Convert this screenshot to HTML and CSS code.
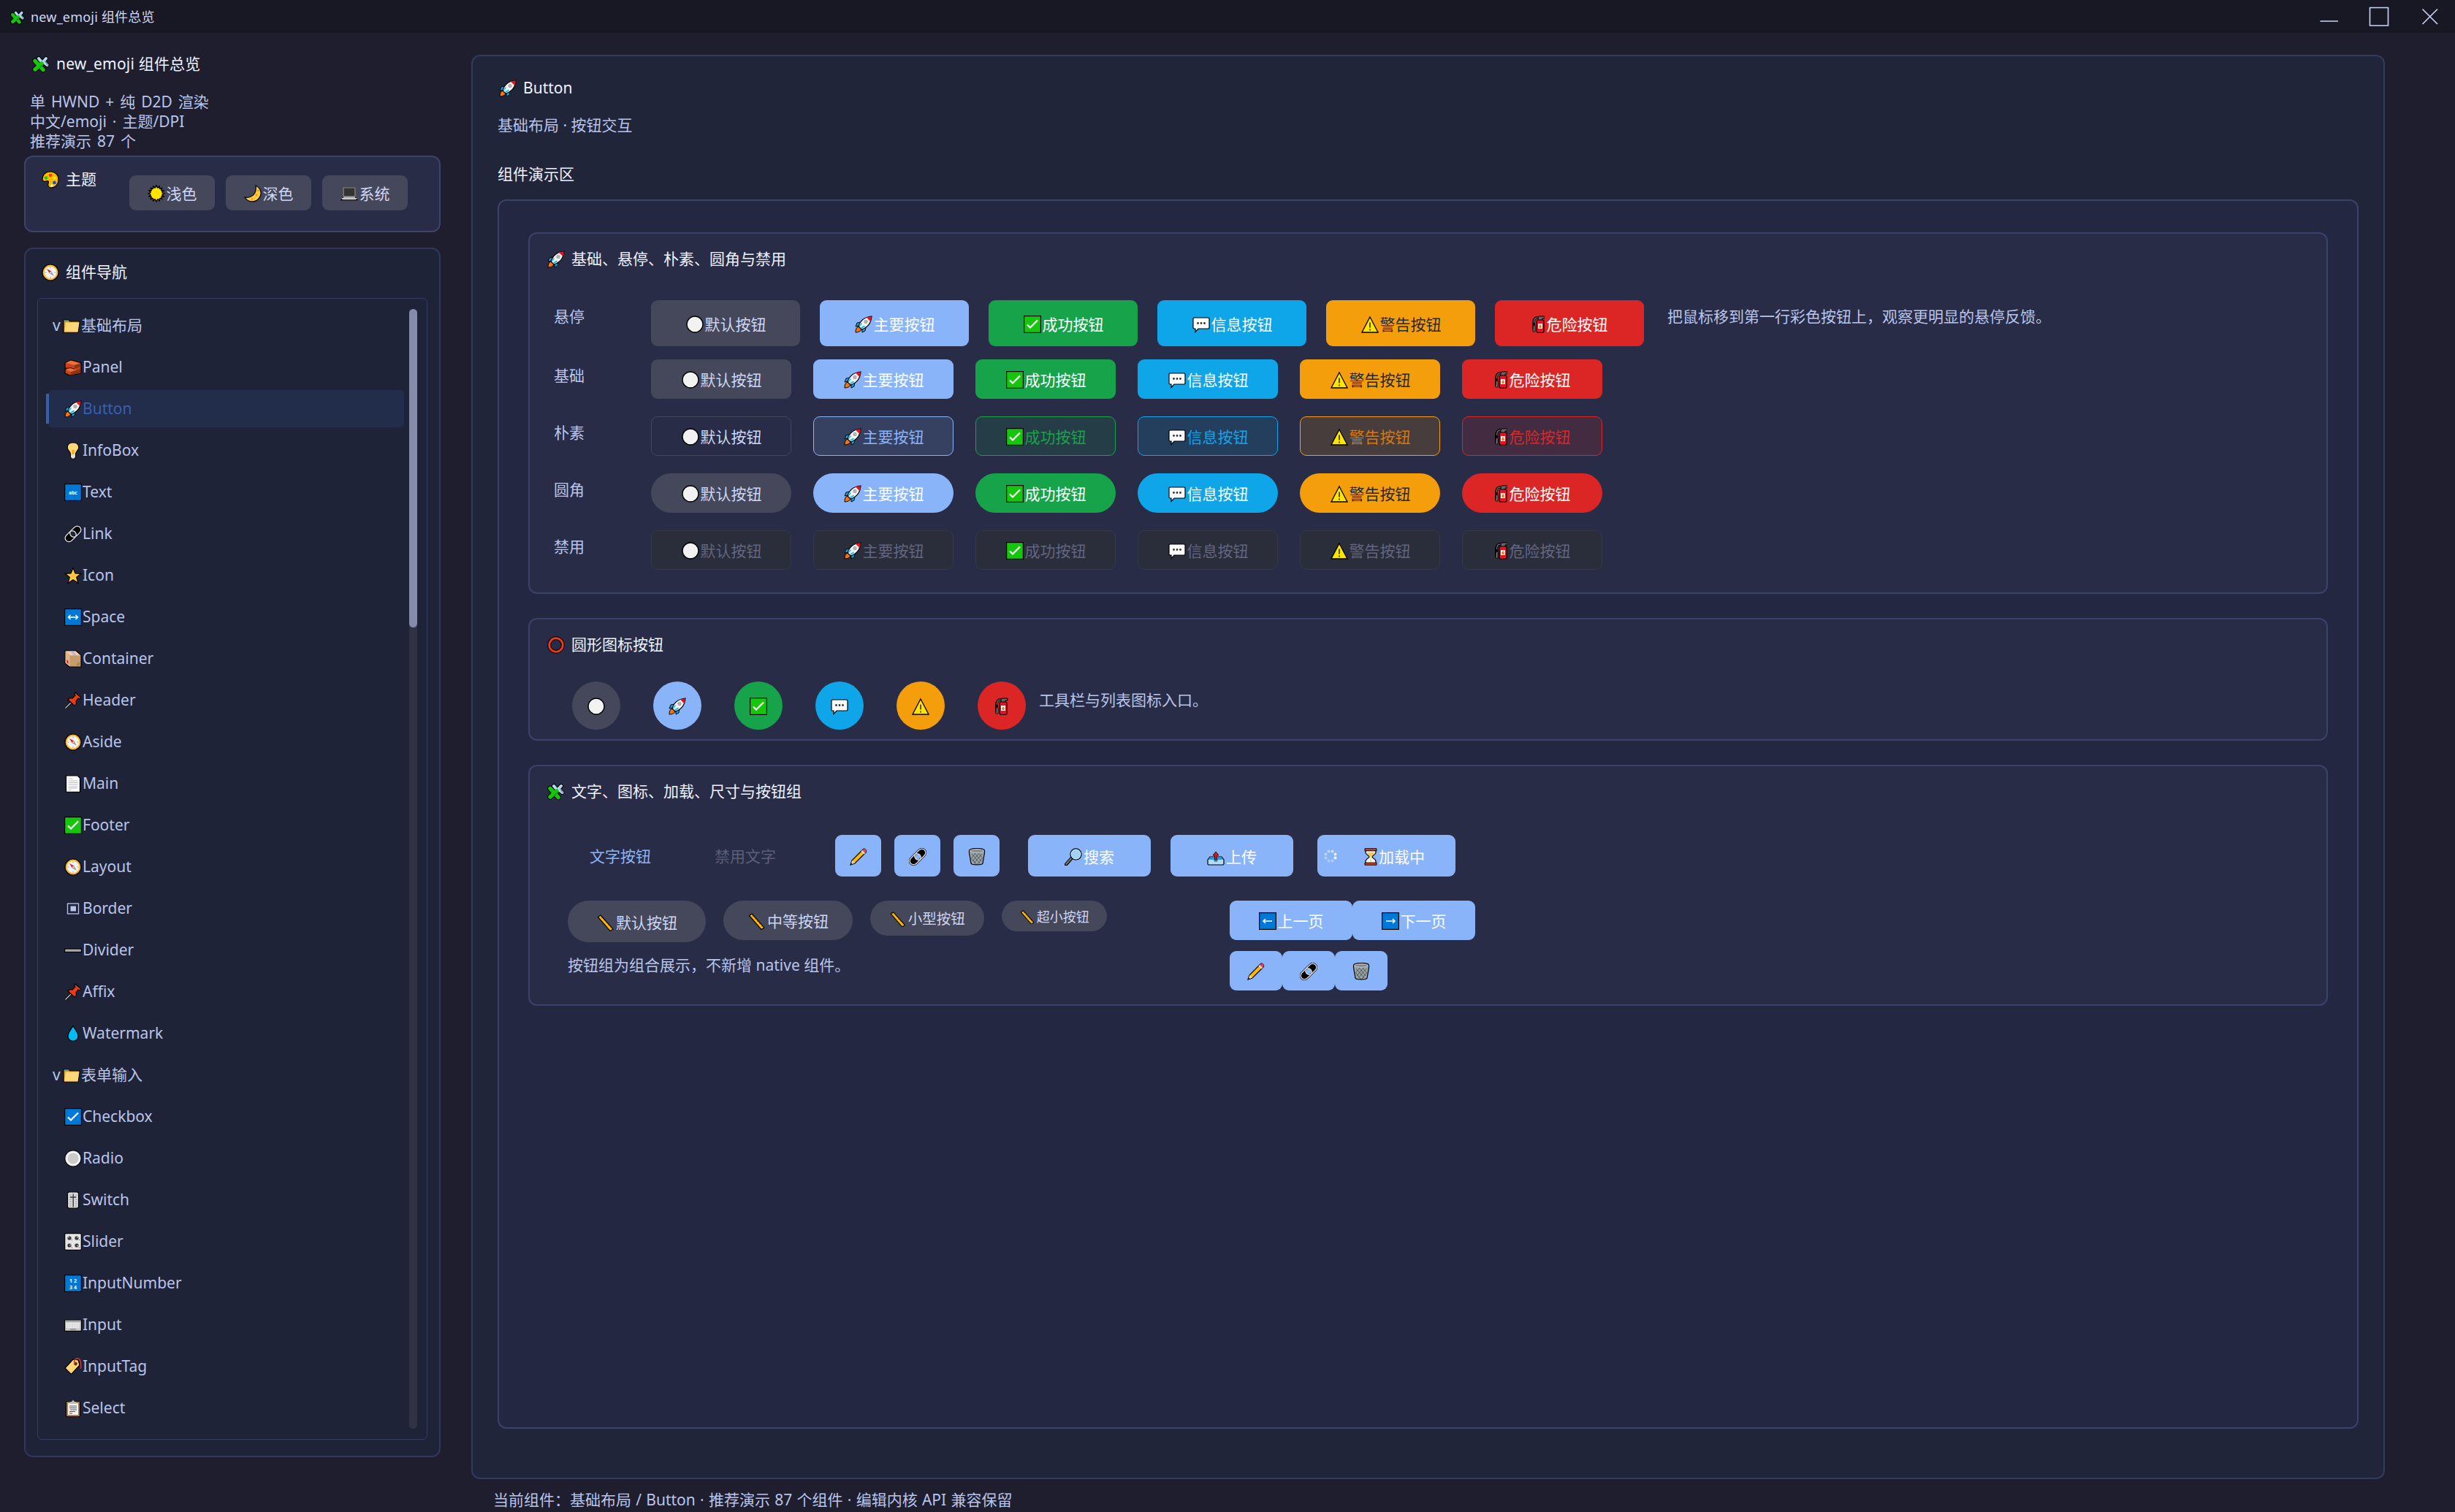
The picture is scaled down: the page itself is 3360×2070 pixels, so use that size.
FILE: index.html
```html
<!DOCTYPE html>
<html lang="zh-CN">
<head>
    <meta charset="UTF-8">
    <meta name="viewport" content="width=device-width, initial-scale=1.0">
    <title>new_emoji 组件总览</title>
    <link rel="stylesheet" href="styles.css">
</head>
<body>

    <!-- Icon sprite -->
    <svg class="sprite" xmlns="http://www.w3.org/2000/svg">
        <symbol id="puzzle" viewBox="0 0 24 24">
            <g fill="none" stroke-linecap="round">
                <path d="M9 4l4 5M19 4l-7 8M20.500 13l-5-4" stroke="#000" stroke-width="6"/>
                <path d="M4 7.500L15 19.500M4 19l9-8" stroke="#000" stroke-width="7.500"/>
                <path d="M9 4l4 5M19 4l-7 8M20.500 13l-5-4" stroke="#b4d6f0" stroke-width="4"/>
                <path d="M18 8l3 5" stroke="#7f97a8" stroke-width="1.500"/>
                <path d="M4 7.500L15 19.500M4 19l9-8" stroke="#16c60c" stroke-width="5.500"/>
                <path d="M14 13l-4 4" stroke="#0f9a08" stroke-width="1.600"/>
            </g>
        </symbol>
        <symbol id="palette" viewBox="0 0 24 24">
            <path d="M12 1C5 1 1 6 1 11c0 3 2 4 5 3 3-1 4 0 3 3-1 4 1 6 4 6 6 0 10-5 10-11C23 5 18 1 12 1z" fill="#ffb900" stroke="#000" stroke-width="1.200"/>
            <circle cx="12" cy="6" r="2.200" fill="#f03a17"/><circle cx="6" cy="9.500" r="2.200" fill="#16c60c"/>
            <circle cx="17.500" cy="9.500" r="2" fill="#fff100"/><circle cx="17.500" cy="16" r="2.300" fill="#0050ef"/><circle cx="14" cy="20" r="1.600" fill="#fff"/>
        </symbol>
        <symbol id="sun" viewBox="0 0 24 24">
            <path d="M12 .8L14 4.700 16.300 1.700 16.600 6 19.900 4.100 18.500 8.100 22.300 7.700 19.300 10.500 23.200 12 19.300 13.500 22.300 16.300 18.500 15.900 19.900 19.900 16.600 18 16.300 22.300 14 19.300 12 23.200 10 19.300 7.700 22.300 7.400 18 4.100 19.900 5.500 15.900 1.700 16.300 4.700 13.500 .8 12 4.700 10.500 1.700 7.700 5.500 8.100 4.100 4.100 7.400 6 7.700 1.700 10 4.700z" fill="#ffb900" stroke="#000" stroke-width="1.300" stroke-linejoin="round"/>
            <circle cx="12" cy="12" r="7.600" fill="#ffe500"/>
        </symbol>
        <symbol id="moon" viewBox="0 0 24 24">
            <path d="M16 1c8 4 9 13 4 18C15 25 5 24 1 17c7 2 17-3 15-16z" fill="#ffc83d" stroke="#000" stroke-width="1.200"/>
            <circle cx="19" cy="8" r="1" fill="#d67d00"/><circle cx="17" cy="14" r="1.500" fill="#e09b20"/><circle cx="11" cy="19.500" r="1" fill="#d67d00"/>
        </symbol>
        <symbol id="laptop" viewBox="0 0 24 24">
            <path d="M4 4h16v12l3 5H1l3-5z" fill="#aaa" stroke="#000" stroke-width="1.200"/>
            <path d="M4 4h16v12H4z" fill="#333" stroke="#999" stroke-width="1.200"/>
            <path d="M1.500 18.500h21" stroke="#ddd" stroke-width="1"/>
        </symbol>
        <symbol id="compass" viewBox="0 0 24 24">
            <circle cx="12" cy="12" r="11" fill="#ffb81f" stroke="#000" stroke-width="1.200"/>
            <circle cx="12" cy="12" r="8.300" fill="#f4f4f4"/>
            <path d="M12 4.500v2M12 17.500v2M4.500 12h2M17.500 12h2" stroke="#999"/>
            <path d="M7 7l6.500 3.500-2.500 3z" fill="#e81224"/><path d="M17 17l-6-3.500 2.500-3z" fill="#999"/>
            <circle cx="12.200" cy="12" r="1.200" fill="#ddd"/>
        </symbol>
        <symbol id="folder" viewBox="0 0 24 24">
            <path d="M1 4h7l1.500 2H23l-2 15H1z" fill="#e8a317" stroke="#000" stroke-width="1.200"/>
            <path d="M1.600 4.600h6l1.200 1.600H1.600z" fill="#31a4dd"/>
            <path d="M4 7.500h18.500L20.500 20.500H2z" fill="#ffd678"/>
        </symbol>
        <symbol id="brick" viewBox="0 0 24 24">
            <path d="M1 6l8-4 14 4v14l-15 3-7-3v-6h2l-2-2z" fill="#c8431a" stroke="#000" stroke-width="1.200"/>
            <path d="M1.800 5.800L9 2.600l13 3.600-8 2.500z" fill="#f07038"/>
            <path d="M14 9l8-2.500v4.500l-8 3z" fill="#8a3416"/>
            <path d="M2 15l6-2 9 2-8 3z" fill="#f07038"/><path d="M9 18.500l13-4.500v5.500L9 22.500z" fill="#8a3416"/>
            <path d="M1 13.500l8-1 5 2" fill="none" stroke="#2a0d05" stroke-width="1"/>
        </symbol>
        <symbol id="rocket" viewBox="0 0 24 24">
            <path d="M5 15l4 4c-1 3-5 4-8 4 0-4 1-7 4-8z" fill="#f7730f" stroke="#000" stroke-width="1"/>
            <path d="M8 9L3 10l-2 5 5-1zM15 16l-1 5-4 2 0-5z" fill="#00a8e8" stroke="#000" stroke-width="1"/>
            <path d="M5 15C7 8 12 2 23 1c-1 11-7 16-14 18z" fill="#f4f4f4" stroke="#000" stroke-width="1.200"/>
            <path d="M16 2.700C18 2 20 1.600 22.500 1.500c0 2.500-.5 4.500-1.200 6.500z" fill="#e81224"/>
            <circle cx="15" cy="8.500" r="2.300" fill="#b8b8b8" stroke="#888" stroke-width=".6"/>
            <path d="M6 14l3-4 1 1-4 5zM9 18l5-3-1-1.500-5 3z" fill="#00bcf2"/>
        </symbol>
        <symbol id="bulb" viewBox="0 0 24 24">
            <path d="M12 1c-9 0-9 8-5.500 11.500C8 14 8.500 16 8.500 17v4l2 2h3l2-2v-4c0-1 .5-3 2-4.500C21 9 21 1 12 1z" fill="#ffd67a" stroke="#000" stroke-width="1.200"/>
            <path d="M9.200 17.500h5.600V21l-1.500 1.500h-2.600L9.200 21z" fill="#e0e0e0"/><path d="M10.500 11h3v6h-3z" fill="#f2a915"/>
        </symbol>
        <symbol id="abc" viewBox="0 0 24 24">
            <rect x=".6" y=".6" width="22.800" height="22.800" fill="#0078d7" stroke="#000" stroke-width="1.200"/>
            <text x="12" y="15" class="glyph-abc">abc</text>
        </symbol>
        <symbol id="link" viewBox="0 0 24 24">
            <g fill="none" transform="rotate(-45 12 12)">
                <path d="M4 5.500h16a6.500 6.500 0 0 1 0 13H4a6.500 6.500 0 0 1 0-13zM12 8.500a3.500 3.500 0 0 0 0 7 3.500 3.500 0 0 0 0-7z" fill="#000" fill-rule="evenodd"/>
                <rect x="-1.200" y="6.800" width="17" height="10.400" rx="5.200" stroke="#d8d8d8" stroke-width="1.500"/>
                <rect x="8.200" y="6.800" width="17" height="10.400" rx="5.200" stroke="#d8d8d8" stroke-width="1.500"/>
            </g>
        </symbol>
        <symbol id="star" viewBox="0 0 24 24">
            <path d="M12 1.500l3 7.500 8 .3-6.300 5 2.200 8L12 17.800 5.100 22.300l2.200-8L1 9.300 9 9z" fill="#ffc83d" stroke="#000" stroke-width="1.200"/>
        </symbol>
        <symbol id="width" viewBox="0 0 24 24">
            <rect x=".6" y=".6" width="22.800" height="22.800" fill="#0078d7" stroke="#000" stroke-width="1.200"/>
            <path d="M5.500 12h13M8.500 9l-3 3 3 3M15.500 9l3 3-3 3" fill="none" stroke="#fff" stroke-width="1.500"/>
        </symbol>
        <symbol id="package" viewBox="0 0 24 24">
            <path d="M1 1h15l7 6v16H7l-6-5z" fill="#c69c6d" stroke="#000" stroke-width="1.200"/>
            <path d="M1.600 1.600h14L22 7.200H8z" fill="#f6cdb4"/><path d="M1.600 2L7.500 7.500v14.800L1.600 17.500z" fill="#e2b48c"/>
            <path d="M8 1.600h4l5 5.600h-4z" fill="#b9b9c4"/><path d="M3.500 13l2 2v4l-2-2z" fill="#e81224"/><path d="M17 20h4M18 18h3" stroke="#8a6a45" stroke-width="1.200"/>
        </symbol>
        <symbol id="pin" viewBox="0 0 24 24">
            <path d="M1.500 22.500l8-8" stroke="#000" stroke-width="3"/><path d="M1.500 22.500l8-8" stroke="#ccc" stroke-width="1.200"/>
            <path d="M15 1l8 7c-1 2-3 2-4 1l-3 4c1 3 0 5-2 6L5 11c1-2 4-3 6-2l4-4c-1-1-1-3 0-4z" fill="#f03a17" stroke="#000" stroke-width="1.200"/>
        </symbol>
        <symbol id="page" viewBox="0 0 24 24">
            <path d="M2.500.8H18l3.500 3.500v19h-19z" fill="#fff" stroke="#000" stroke-width="1.200"/>
            <path d="M5.500 5h6M5.500 8h13M5.500 10.500h13M5.500 13h13M5.500 16h13M5.500 18h12M5.500 20.500h4" stroke="#bbb" stroke-width="1.200"/>
        </symbol>
        <symbol id="check" viewBox="0 0 24 24">
            <rect x=".6" y=".6" width="22.800" height="22.800" fill="#16c60c" stroke="#000" stroke-width="1.200"/>
            <path d="M5 12.500l4 4 10-10" fill="none" stroke="#fff" stroke-width="2.200"/>
        </symbol>
        <symbol id="border" viewBox="0 0 24 24">
            <rect x="4.500" y="5" width="15" height="14" fill="none" stroke="#b9c4ea" stroke-width="1.300"/>
            <rect x="8.500" y="8.500" width="7.500" height="7" fill="#b9c4ea"/>
        </symbol>
        <symbol id="divider" viewBox="0 0 24 24">
            <rect x=".6" y="10" width="22.800" height="4.400" fill="#aaa" stroke="#000" stroke-width="1.200"/>
        </symbol>
        <symbol id="drop" viewBox="0 0 24 24">
            <path d="M12 1.500c3 5 7 9 7 14 0 9-14 9-14 0 0-5 4-9 7-14z" fill="#00bcf2" stroke="#000" stroke-width="1.200"/>
        </symbol>
        <symbol id="checkbox" viewBox="0 0 24 24">
            <rect x=".6" y=".6" width="22.800" height="22.800" fill="#0078d7" stroke="#000" stroke-width="1.200"/>
            <path d="M5 12.500l4 4 10-10" fill="none" stroke="#fff" stroke-width="2.200"/>
        </symbol>
        <symbol id="radio" viewBox="0 0 24 24">
            <circle cx="12" cy="12" r="11.200" fill="#e0e0e0" stroke="#000" stroke-width="1.200"/>
            <circle cx="12" cy="12" r="8.500" fill="#ccc" stroke="#fff" stroke-width="1.500"/>
        </symbol>
        <symbol id="switch" viewBox="0 0 24 24">
            <rect x="4.500" y=".8" width="15" height="22.400" rx="2.500" fill="#ddd" stroke="#000" stroke-width="1.200"/>
            <path d="M7 5h3M7 8h3M7 11h3M7 14h3M7 17h3M7 20h3M14.500 5h3M14.500 11h3M14.500 14h3M14.500 17h3M14.500 20h3" stroke="#999"/>
            <path d="M12.200 3.500v18M8 8h8.500" stroke="#333" stroke-width="1.400"/>
        </symbol>
        <symbol id="knobs" viewBox="0 0 24 24">
            <rect x=".7" y=".7" width="22.600" height="22.600" rx="1.500" fill="#e6e6e6" stroke="#000" stroke-width="1.200"/>
            <g fill="#333" stroke="#888" stroke-width=".5"><circle cx="7" cy="7" r="2.600"/><circle cx="17" cy="7" r="2.600"/><circle cx="7" cy="17" r="2.600"/><circle cx="17" cy="17" r="2.600"/></g>
            <path d="M7 7L5 5M17 7l2-2M7 17l2-1M17 17l2 1" stroke="#ddd"/>
            <path d="M10 9.500h1M20 9.500h1M10 20h1M20 20h1" stroke="#e81224"/>
        </symbol>
        <symbol id="numbers" viewBox="0 0 24 24">
            <rect x=".6" y=".6" width="22.800" height="22.800" fill="#0078d7" stroke="#000" stroke-width="1.200"/>
            <text x="12" y="11" class="glyph-num">1 2</text>
            <text x="12" y="19.500" class="glyph-num">3 4</text>
        </symbol>
        <symbol id="keyboard" viewBox="0 0 24 24">
            <rect x=".6" y="5" width="22.800" height="15.400" rx="1" fill="#ccc" stroke="#000" stroke-width="1.200"/>
            <path d="M1.500 6.500h21" stroke="#8a8a8a" stroke-width="1.500"/>
            <path d="M2.500 10h19M2.500 12.500h19M2.500 15h19" stroke="#fff" stroke-width="1.500" stroke-dasharray="1.600 .7"/><path d="M8 18h8" stroke="#888" stroke-width="1.400"/>
        </symbol>
        <symbol id="tag" viewBox="0 0 24 24">
            <path d="M1 14L12 2l7 1 2 7L9.500 22.500z" fill="#ffd67a" stroke="#000" stroke-width="1.200"/>
            <circle cx="15.500" cy="8" r="2.200" fill="#222" stroke="#c87800"/>
            <path d="M15 8C11 3 17-1 21 2c2 3 2 8 1.500 13" fill="none" stroke="#d13438" stroke-width="1.500"/>
        </symbol>
        <symbol id="clipboard" viewBox="0 0 24 24">
            <rect x="2.500" y="2.500" width="19" height="21" rx="1" fill="#b97a4b" stroke="#000" stroke-width="1.200"/>
            <path d="M5 5h14v16H5z" fill="#f4f4f4"/><path d="M8 3h2l2-2.500L14 3h2v3H8z" fill="#bbb"/>
            <path d="M7 9h10M7 11.500h10M8 14h9M7 16.500h8M7 19h4" stroke="#555" stroke-width="1"/>
        </symbol>
        <symbol id="circle" viewBox="0 0 24 24">
            <circle cx="12" cy="12" r="11" fill="#f2f2f2" stroke="#000" stroke-width="1.400"/>
        </symbol>
        <symbol id="chat" viewBox="0 0 24 24">
            <path d="M2 3h20l1 1v13l-1 1H8l-4 4.500V18H2l-1-1V4z" fill="#fff" stroke="#000" stroke-width="1.200"/>
            <circle cx="7.500" cy="10.500" r="1.400" fill="#333"/><circle cx="12" cy="10.500" r="1.400" fill="#333"/><circle cx="16.500" cy="10.500" r="1.400" fill="#333"/>
        </symbol>
        <symbol id="warning" viewBox="0 0 24 24">
            <path d="M12 2L23 23H1z" fill="#ffe500" stroke="#000" stroke-width="1.300"/>
            <path d="M12 9.500v7M12 18.500v2" stroke="#222" stroke-width="1.500"/>
        </symbol>
        <symbol id="extinguisher" viewBox="0 0 18 24">
            <path d="M10 3C4 2 2 5 2 10v11" fill="none" stroke="#000" stroke-width="3.600"/><path d="M10 3C4 2 2.500 5 2.500 10" fill="none" stroke="#777" stroke-width="1.200"/>
            <path d="M1.500 13.500h2.500V22H1z" fill="#777" stroke="#000" stroke-width=".8"/>
            <path d="M9 1h8v3h-3v3H8V3z" fill="#666" stroke="#000" stroke-width="1"/>
            <rect x="6" y="6" width="10" height="17.300" rx="2" fill="#e81224" stroke="#000" stroke-width="1.200"/>
            <rect x="8" y="11" width="6" height="7" fill="#fff"/><path d="M11 12l2 3-1 2h-2l-1-2z" fill="#f7730f"/>
        </symbol>
        <symbol id="ring" viewBox="0 0 24 24">
            <circle cx="12" cy="12" r="9.300" fill="none" stroke="#000" stroke-width="5"/>
            <circle cx="12" cy="12" r="9.300" fill="none" stroke="#f03a17" stroke-width="2.800"/>
        </symbol>
        <symbol id="pencil" viewBox="0 0 24 24">
            <path d="M1 23l2-6L18 2c2-2 6 1 4 4L7 21z" fill="#ffb900" stroke="#000" stroke-width="1.200"/>
            <path d="M16.500 3.500L18 2c2-2 6 1 4 4l-1.500 1.500z" fill="#e74856"/><path d="M15.500 4.500l1.500-1.500 4 4-1.500 1.500z" fill="#ddd"/>
            <path d="M1.500 22.500L3.300 17l3.500 3.500z" fill="#f2d3b0"/><path d="M1.500 22.500l.8-2 1.200 1.200z" fill="#000"/>
        </symbol>
        <symbol id="trash" viewBox="0 0 24 24">
            <path d="M1.500 3.500c0-4 21-4 21 0v3L20 21c-1 2.500-15 2.500-16 0L1.500 6.500z" fill="#9aa3a6" stroke="#000" stroke-width="1.200"/>
            <ellipse cx="12" cy="4" rx="9.300" ry="2" fill="#7d8689" stroke="#c0c6c8"/>
            <path d="M5 8l11 13M9 7l9 11M14 7l5 6M4 13l7 9M19 8L8 21M15 7L6 18M10 7l-5 6M20 13l-7 9" stroke="#4c5356" stroke-width=".9"/>
        </symbol>
        <symbol id="search" viewBox="0 0 24 24">
            <path d="M2 22.500l8-9" stroke="#000" stroke-width="4.400" stroke-linecap="round"/><path d="M2.300 22l7-8" stroke="#777" stroke-width="2.200" stroke-linecap="round"/>
            <circle cx="15.500" cy="8.500" r="7.600" fill="#9fd3f5" stroke="#000" stroke-width="1.200"/><circle cx="15.500" cy="8.500" r="6.400" fill="none" stroke="#c9e6f8" stroke-width="1"/>
        </symbol>
        <symbol id="upload" viewBox="0 0 24 24">
            <path d="M4 12h16l3 4v6l-1 1H2l-1-1v-6z" fill="#b4dcf5" stroke="#000" stroke-width="1.200"/>
            <path d="M4 13h16l2.500 3H15l-1 3h-4l-1-3H1.500z" fill="#2e96e8"/>
            <path d="M12 5l4 5h-2.500v6h-3v-6H8z" fill="#e81224" stroke="#000" stroke-width=".8"/>
        </symbol>
        <symbol id="hourglass" viewBox="0 0 18 24">
            <path d="M2 3h14v3c0 3-5 4-5 6s5 3 5 6v3H2v-3c0-3 5-4 5-6S2 9 2 6z" fill="#f4f4f4" stroke="#000" stroke-width="1.200"/>
            <path d="M4 6h10c0 3-4 4-4.500 6v8h-1v-8C8 10 4 9 4 6z" fill="#ffc83d"/>
            <path d="M1 .8h16v3H1zM1 20.200h16v3H1z" fill="#e8471c" stroke="#000" stroke-width="1"/>
        </symbol>
        <symbol id="ruler" viewBox="0 0 24 24">
            <path d="M5 2L22 21l-4 2.500L1.500 4.500z" fill="#ffb900" stroke="#000" stroke-width="1.200"/>
            <path d="M7 5L5.800 6M10 8.500l-1.200 1M13 12l-1.200 1M16 15.500l-1.200 1M19 19l-1.200 1" stroke="#a86a00"/>
        </symbol>
        <symbol id="prev" viewBox="0 0 24 24">
            <rect x=".6" y=".6" width="22.800" height="22.800" fill="#0078d7" stroke="#000" stroke-width="1.200"/>
            <path d="M18 12H6.500M9 9l-3 3 3 3" fill="none" stroke="#fff" stroke-width="1.500"/>
        </symbol>
        <symbol id="next" viewBox="0 0 24 24">
            <rect x=".6" y=".6" width="22.800" height="22.800" fill="#0078d7" stroke="#000" stroke-width="1.200"/>
            <path d="M6 12h11.500M15 9l3 3-3 3" fill="none" stroke="#fff" stroke-width="1.500"/>
        </symbol>
    </svg>

    <!-- Title bar -->
    <header class="titlebar">
        <svg class="icon"><use href="#puzzle"/></svg>
        <span class="titlebar-text">new_emoji 组件总览</span>
        <svg class="window-controls" viewBox="0 0 192 45">
            <path d="M7.500 29h24.500M75.500 10.500h25v24.500h-25zM147.500 12.500l20.500 20.500M168 12.500L147.500 33"/>
        </svg>
    </header>

    <div class="layout">
        <!-- Sidebar -->
        <aside class="sidebar">
            <h1 class="heading app-title"><svg class="icon"><use href="#puzzle"/></svg>new_emoji 组件总览</h1>
            <p class="intro">单 HWND + 纯 D2D 渲染<br>中文/emoji · 主题/DPI<br>推荐演示 87 个</p>

            <section class="theme-card">
                <h2 class="heading"><svg class="icon"><use href="#palette"/></svg>主题</h2>
                <div class="theme-buttons">
                    <button class="btn"><svg class="icon"><use href="#sun"/></svg>浅色</button>
                    <button class="btn"><svg class="icon"><use href="#moon"/></svg>深色</button>
                    <button class="btn"><svg class="icon"><use href="#laptop"/></svg>系统</button>
                </div>
            </section>

            <nav class="nav-card">
                <h2 class="heading"><svg class="icon"><use href="#compass"/></svg>组件导航</h2>
                <div class="tree">
                    <ul class="tree-list">
                        <li class="tree-group"><span class="caret">v</span><svg class="icon"><use href="#folder"/></svg>基础布局</li>
                        <li class="tree-item"><svg class="icon"><use href="#brick"/></svg>Panel</li>
                        <li class="tree-item active"><svg class="icon"><use href="#rocket"/></svg>Button</li>
                        <li class="tree-item"><svg class="icon"><use href="#bulb"/></svg>InfoBox</li>
                        <li class="tree-item"><svg class="icon"><use href="#abc"/></svg>Text</li>
                        <li class="tree-item"><svg class="icon"><use href="#link"/></svg>Link</li>
                        <li class="tree-item"><svg class="icon"><use href="#star"/></svg>Icon</li>
                        <li class="tree-item"><svg class="icon"><use href="#width"/></svg>Space</li>
                        <li class="tree-item"><svg class="icon"><use href="#package"/></svg>Container</li>
                        <li class="tree-item"><svg class="icon"><use href="#pin"/></svg>Header</li>
                        <li class="tree-item"><svg class="icon"><use href="#compass"/></svg>Aside</li>
                        <li class="tree-item"><svg class="icon"><use href="#page"/></svg>Main</li>
                        <li class="tree-item"><svg class="icon"><use href="#check"/></svg>Footer</li>
                        <li class="tree-item"><svg class="icon"><use href="#compass"/></svg>Layout</li>
                        <li class="tree-item"><svg class="icon"><use href="#border"/></svg>Border</li>
                        <li class="tree-item"><svg class="icon"><use href="#divider"/></svg>Divider</li>
                        <li class="tree-item"><svg class="icon"><use href="#pin"/></svg>Affix</li>
                        <li class="tree-item"><svg class="icon"><use href="#drop"/></svg>Watermark</li>
                        <li class="tree-group"><span class="caret">v</span><svg class="icon"><use href="#folder"/></svg>表单输入</li>
                        <li class="tree-item"><svg class="icon"><use href="#checkbox"/></svg>Checkbox</li>
                        <li class="tree-item"><svg class="icon"><use href="#radio"/></svg>Radio</li>
                        <li class="tree-item"><svg class="icon"><use href="#switch"/></svg>Switch</li>
                        <li class="tree-item"><svg class="icon"><use href="#knobs"/></svg>Slider</li>
                        <li class="tree-item"><svg class="icon"><use href="#numbers"/></svg>InputNumber</li>
                        <li class="tree-item"><svg class="icon"><use href="#keyboard"/></svg>Input</li>
                        <li class="tree-item"><svg class="icon"><use href="#tag"/></svg>InputTag</li>
                        <li class="tree-item"><svg class="icon"><use href="#clipboard"/></svg>Select</li>
                    </ul>
                    <div class="scrollbar"><div class="scrollbar-thumb"></div></div>
                </div>
            </nav>
        </aside>

        <!-- Component page -->
        <div class="content">
            <main class="page">
                <h2 class="heading page-title"><svg class="icon"><use href="#rocket"/></svg>Button</h2>
                <p class="page-desc">基础布局 · 按钮交互</p>
                <p class="page-label">组件演示区</p>

                <div class="stage">
                    <section class="group group-variants">
                        <h3 class="heading"><svg class="icon"><use href="#rocket"/></svg>基础、悬停、朴素、圆角与禁用</h3>
                        <div class="rows">
                            <div class="row row-hover">
                                <span class="row-label">悬停</span>
                                <button class="btn"><svg class="icon"><use href="#circle"/></svg>默认按钮</button>
                                <button class="btn primary"><svg class="icon"><use href="#rocket"/></svg>主要按钮</button>
                                <button class="btn success"><svg class="icon"><use href="#check"/></svg>成功按钮</button>
                                <button class="btn info"><svg class="icon"><use href="#chat"/></svg>信息按钮</button>
                                <button class="btn warning"><svg class="icon"><use href="#warning"/></svg>警告按钮</button>
                                <button class="btn danger"><svg class="icon narrow"><use href="#extinguisher"/></svg>危险按钮</button>
                                <span class="hint">把鼠标移到第一行彩色按钮上，观察更明显的悬停反馈。</span>
                            </div>
                            <div class="row">
                                <span class="row-label">基础</span>
                                <button class="btn"><svg class="icon"><use href="#circle"/></svg>默认按钮</button>
                                <button class="btn primary"><svg class="icon"><use href="#rocket"/></svg>主要按钮</button>
                                <button class="btn success"><svg class="icon"><use href="#check"/></svg>成功按钮</button>
                                <button class="btn info"><svg class="icon"><use href="#chat"/></svg>信息按钮</button>
                                <button class="btn warning"><svg class="icon"><use href="#warning"/></svg>警告按钮</button>
                                <button class="btn danger"><svg class="icon narrow"><use href="#extinguisher"/></svg>危险按钮</button>
                            </div>
                            <div class="row row-plain">
                                <span class="row-label">朴素</span>
                                <button class="btn"><svg class="icon"><use href="#circle"/></svg>默认按钮</button>
                                <button class="btn primary"><svg class="icon"><use href="#rocket"/></svg>主要按钮</button>
                                <button class="btn success"><svg class="icon"><use href="#check"/></svg>成功按钮</button>
                                <button class="btn info"><svg class="icon"><use href="#chat"/></svg>信息按钮</button>
                                <button class="btn warning"><svg class="icon"><use href="#warning"/></svg>警告按钮</button>
                                <button class="btn danger"><svg class="icon narrow"><use href="#extinguisher"/></svg>危险按钮</button>
                            </div>
                            <div class="row row-round">
                                <span class="row-label">圆角</span>
                                <button class="btn"><svg class="icon"><use href="#circle"/></svg>默认按钮</button>
                                <button class="btn primary"><svg class="icon"><use href="#rocket"/></svg>主要按钮</button>
                                <button class="btn success"><svg class="icon"><use href="#check"/></svg>成功按钮</button>
                                <button class="btn info"><svg class="icon"><use href="#chat"/></svg>信息按钮</button>
                                <button class="btn warning"><svg class="icon"><use href="#warning"/></svg>警告按钮</button>
                                <button class="btn danger"><svg class="icon narrow"><use href="#extinguisher"/></svg>危险按钮</button>
                            </div>
                            <div class="row">
                                <span class="row-label">禁用</span>
                                <button class="btn" disabled><svg class="icon"><use href="#circle"/></svg>默认按钮</button>
                                <button class="btn" disabled><svg class="icon"><use href="#rocket"/></svg>主要按钮</button>
                                <button class="btn" disabled><svg class="icon"><use href="#check"/></svg>成功按钮</button>
                                <button class="btn" disabled><svg class="icon"><use href="#chat"/></svg>信息按钮</button>
                                <button class="btn" disabled><svg class="icon"><use href="#warning"/></svg>警告按钮</button>
                                <button class="btn" disabled><svg class="icon narrow"><use href="#extinguisher"/></svg>危险按钮</button>
                            </div>
                        </div>
                    </section>

                    <section class="group group-circles">
                        <h3 class="heading"><svg class="icon"><use href="#ring"/></svg>圆形图标按钮</h3>
                        <div class="circles">
                            <button class="btn circle"><svg class="icon"><use href="#circle"/></svg></button>
                            <button class="btn circle primary"><svg class="icon"><use href="#rocket"/></svg></button>
                            <button class="btn circle success"><svg class="icon"><use href="#check"/></svg></button>
                            <button class="btn circle info"><svg class="icon"><use href="#chat"/></svg></button>
                            <button class="btn circle warning"><svg class="icon"><use href="#warning"/></svg></button>
                            <button class="btn circle danger"><svg class="icon narrow"><use href="#extinguisher"/></svg></button>
                            <span class="hint">工具栏与列表图标入口。</span>
                        </div>
                    </section>

                    <section class="group group-misc">
                        <h3 class="heading"><svg class="icon"><use href="#puzzle"/></svg>文字、图标、加载、尺寸与按钮组</h3>
                        <div class="toolbar">
                            <button class="btn-text">文字按钮</button>
                            <button class="btn-text" disabled>禁用文字</button>
                            <div class="icon-set">
                                <button class="btn primary"><svg class="icon"><use href="#pencil"/></svg></button>
                                <button class="btn primary"><svg class="icon"><use href="#link"/></svg></button>
                                <button class="btn primary"><svg class="icon"><use href="#trash"/></svg></button>
                            </div>
                            <div class="action-set">
                                <button class="btn primary"><svg class="icon"><use href="#search"/></svg>搜索</button>
                                <button class="btn primary"><svg class="icon"><use href="#upload"/></svg>上传</button>
                                <button class="btn primary loading">
                                    <svg class="spinner" viewBox="0 0 18 18" fill="#fff">
                                        <circle cx="11.500" cy="2.500" r="1.900" opacity=".6"/><circle cx="15.500" cy="6.500" r="1.900" opacity=".8"/>
                                        <circle cx="15.500" cy="11.500" r="1.900"/><circle cx="11.500" cy="15.500" r="1.900" opacity=".35"/>
                                        <circle cx="6.500" cy="15.500" r="1.900" opacity=".35"/><circle cx="2.500" cy="11.500" r="1.900" opacity=".4"/>
                                        <circle cx="2.500" cy="6.500" r="1.900" opacity=".45"/><circle cx="6.500" cy="2.500" r="1.900" opacity=".5"/>
                                    </svg>
                                    <svg class="icon narrow"><use href="#hourglass"/></svg>加载中
                                </button>
                            </div>
                        </div>
                        <div class="misc-bottom">
                            <div class="sizes">
                                <div class="size-row">
                                    <button class="btn size-default"><svg class="icon"><use href="#ruler"/></svg>默认按钮</button>
                                    <button class="btn size-medium"><svg class="icon"><use href="#ruler"/></svg>中等按钮</button>
                                    <button class="btn size-small"><svg class="icon"><use href="#ruler"/></svg>小型按钮</button>
                                    <button class="btn size-mini"><svg class="icon"><use href="#ruler"/></svg>超小按钮</button>
                                </div>
                                <p class="hint">按钮组为组合展示，不新增 native 组件。</p>
                            </div>
                            <div class="button-groups">
                                <div class="btn-group">
                                    <button class="btn primary"><svg class="icon"><use href="#prev"/></svg>上一页</button>
                                    <button class="btn primary"><svg class="icon"><use href="#next"/></svg>下一页</button>
                                </div>
                                <div class="btn-group icons">
                                    <button class="btn primary"><svg class="icon"><use href="#pencil"/></svg></button>
                                    <button class="btn primary"><svg class="icon"><use href="#link"/></svg></button>
                                    <button class="btn primary"><svg class="icon"><use href="#trash"/></svg></button>
                                </div>
                            </div>
                        </div>
                    </section>
                </div>
            </main>
            <footer class="status">当前组件：基础布局 / Button · 推荐演示 87 个组件 · 编辑内核 API 兼容保留</footer>
        </div>
    </div>

</body>
</html>
```
FILE: styles.css
```css
* {
    box-sizing: border-box;
    margin: 0;
    padding: 0;
}

body {
    height: 2070px;
    overflow: hidden;
    background: #1e1e2e;
    color: #b9c4ea;
    font-family: "Noto Sans", "Noto Sans CJK SC", sans-serif;
    font-size: 21px;
    line-height: 30px;
    white-space: nowrap;
}

.sprite {
    display: none;
}

.icon {
    width: 1.143em;
    height: 1.143em;
    flex: none;
}

.icon.narrow {
    width: .857em;
}

.glyph-abc {
    font: bold 6.5px "Noto Sans", sans-serif;
    fill: #fff;
    text-anchor: middle;
}

.glyph-num {
    font: bold 7px "Noto Sans", sans-serif;
    fill: #fff;
    text-anchor: middle;
}

.heading {
    display: flex;
    align-items: center;
    gap: 9px;
    height: 30px;
    padding-bottom: 2px;
    color: #eef2ff;
    font-size: 21px;
    font-weight: 400;
}

.heading .icon {
    margin-top: 2px;
}

/* Title bar */
.titlebar {
    display: flex;
    align-items: center;
    height: 45px;
    padding-left: 14px;
    background: #181825;
    color: #cdd6f4;
    font-size: 18px;
}

.titlebar .icon {
    width: 20px;
    height: 20px;
    margin-top: 3px;
}

.titlebar-text {
    margin-left: 8px;
    letter-spacing: .2px;
}

.window-controls {
    width: 192px;
    height: 45px;
    margin-left: auto;
    fill: none;
    stroke: #cdd6f4;
    stroke-width: 1.6;
}

.layout {
    display: flex;
    padding: 0 96px 0 33px;
    gap: 42px;
}

/* Sidebar */
.sidebar {
    width: 570px;
    padding-top: 28px;
}

.app-title {
    margin-left: 11px;
    letter-spacing: .2px;
}

.intro {
    margin: 23px 0 6px 8px;
    line-height: 27px;
    word-spacing: 2.5px;
}

.theme-card {
    display: flex;
    align-items: flex-start;
    height: 105px;
    padding: 16px 0 0 22px;
    background: #292c46;
    border: 2px solid #3a4469;
    border-radius: 12px;
}

.theme-card .heading {
    width: 120px;
}

.theme-buttons {
    display: flex;
    gap: 15px;
    margin-top: 9px;
}

.theme-buttons .btn {
    width: 117px;
    height: 48px;
}

.nav-card {
    height: 1656px;
    margin-top: 21px;
    padding: 17px 16px 0;
    background: #1f2337;
    border: 2px solid #2f385a;
    border-radius: 12px;
}

.nav-card > .heading {
    margin-left: 6px;
}

.tree {
    display: flex;
    height: 1563px;
    margin-top: 20px;
    padding: 0 13px 0 11px;
    border: 1px solid #343b60;
    border-radius: 6px;
}

.tree-list {
    flex: 1;
    padding-top: 8px;
    list-style: none;
}

.tree-group,
.tree-item {
    display: flex;
    align-items: center;
    gap: 1px;
    height: 51px;
    margin: 3px 0 6px 3px;
    padding-bottom: 2px;
}

.tree-group {
    padding-left: 6px;
}

.tree-item {
    position: relative;
    padding-left: 22px;
    border-radius: 5px;
}

.caret {
    width: 13px;
}

.tree-item .icon,
.tree-group .icon {
    margin-top: 3px;
}

.tree-item.active {
    background: #222d4b;
    color: #385fae;
}

.tree-item.active::before {
    content: "";
    position: absolute;
    left: -3px;
    top: 5px;
    width: 4px;
    height: 41px;
    background: #385fae;
}

.scrollbar {
    width: 11px;
    margin: 14px 0 14px 7px;
    background: #313244;
    border-radius: 6px;
}

.scrollbar-thumb {
    height: 436px;
    background: #858ca9;
    border-radius: 6px;
}

/* Component page */
.content {
    flex: 1;
    padding-top: 30px;
}

.page {
    height: 1950px;
    padding: 29px 34px 0;
    background: #20253a;
    border: 2px solid #313a60;
    border-radius: 12px;
}

.page-title {
    margin-left: 2px;
}

.page-desc {
    margin-top: 20px;
}

.page-label {
    margin-top: 37px;
    color: #eef2ff;
}

.stage {
    display: flex;
    flex-direction: column;
    gap: 33px;
    height: 1683px;
    margin-top: 20px;
    padding: 43px 40px 0;
    background: #242742;
    border: 2px solid #3a4269;
    border-radius: 12px;
}

.group {
    padding: 20px 24px 0;
    background: #292c46;
    border: 2px solid #3a4269;
    border-radius: 12px;
}

.group-variants {
    height: 495px;
}

.group-circles {
    height: 168px;
}

.group-misc {
    height: 330px;
}

/* Buttons */
.btn {
    display: flex;
    align-items: center;
    justify-content: center;
    gap: 2px;
    flex: none;
    padding-top: 2px;
    background: #45475a;
    border: none;
    border-radius: 9px;
    color: #cdd6f4;
    font-family: inherit;
    font-size: 21px;
    line-height: 30px;
}

.btn.primary {
    background: #89b4fa;
    color: #fff;
}

.btn.success {
    background: #16a34a;
    color: #fff;
}

.btn.info {
    background: #0ea5e9;
    color: #fff;
}

.btn.warning {
    background: #f59e0b;
    color: #1f2937;
}

.btn.danger {
    background: #dc2626;
    color: #fff;
}

.btn:disabled {
    background: #2a2d3a;
    border: 1.5px solid #363848;
    color: #626580;
}

.btn.circle {
    width: 66px;
    height: 66px;
    border-radius: 50%;
}

/* Variant rows */
.rows {
    margin: 41px 0 0 9px;
}

.row {
    display: flex;
    gap: 30px;
    margin-bottom: 24px;
}

.row .btn {
    width: 192px;
    height: 54px;
    padding-left: 1px;
}

.row-hover {
    gap: 27px;
    margin-bottom: 18px;
}

.row-hover .btn {
    width: 204px;
    height: 63px;
}

.row-label {
    width: 103px;
    margin-top: 7px;
}

.row-hover .row-label {
    width: 106px;
}

.row .hint {
    margin: 7px 0 0 5px;
}

.row-plain .btn {
    background: transparent;
    border: 1.5px solid #45475a;
}

.row-plain .primary {
    background: rgba(137, 180, 250, .15);
    border-color: #89b4fa;
    color: #89b4fa;
}

.row-plain .success {
    background: rgba(22, 163, 74, .15);
    border-color: #16a34a;
    color: #16a34a;
}

.row-plain .info {
    background: rgba(14, 165, 233, .15);
    border-color: #0ea5e9;
    color: #0ea5e9;
}

.row-plain .warning {
    background: rgba(245, 158, 11, .15);
    border-color: #f59e0b;
    color: #d97706;
}

.row-plain .danger {
    background: rgba(220, 38, 38, .15);
    border-color: #dc2626;
    color: #dc2626;
}

.row-round .btn {
    border-radius: 27px;
}

/* Circle buttons */
.circles {
    display: flex;
    gap: 45px;
    margin: 35px 0 0 34px;
}

.circles .hint {
    margin: 10px 0 0 -27px;
}

/* Text, icon, loading, size and group buttons */
.toolbar {
    display: flex;
    margin: 44px 0 0 28px;
}

.toolbar .btn,
.btn-text {
    height: 57px;
}

.btn-text {
    width: 144px;
    padding-bottom: 2px;
    background: none;
    border: none;
    color: #89b4fa;
    font-family: inherit;
    font-size: 21px;
}

.btn-text:disabled {
    width: 150px;
    margin-left: 24px;
    color: #5c5f77;
}

.icon-set {
    display: flex;
    gap: 18px;
    margin: 0 39px 0 48px;
}

.icon-set .btn {
    width: 63px;
}

.action-set {
    display: flex;
    gap: 27px;
}

.action-set .btn {
    width: 168px;
}

.action-set .loading {
    width: 189px;
    margin-left: 6px;
    padding-right: 42px;
    justify-content: flex-end;
}

.spinner {
    width: 18px;
    height: 18px;
    margin: 0 auto 2px 9px;
}

.misc-bottom {
    display: flex;
    margin: 33px 0 0 28px;
}

.sizes {
    width: 906px;
}

.size-row {
    display: flex;
    align-items: flex-start;
    gap: 24px;
    height: 57px;
}

.size-row .btn {
    padding-left: 1px;
    border-radius: 29px;
}

.size-row .size-default {
    width: 189px;
    height: 57px;
}

.size-row .size-medium {
    width: 177px;
    height: 54px;
}

.size-row .size-small {
    width: 156px;
    height: 48px;
    font-size: 19.5px;
}

.size-row .size-mini {
    width: 144px;
    height: 42px;
    font-size: 18px;
}

.sizes .hint {
    margin-top: 16px;
}

.btn-group {
    display: flex;
    margin-bottom: 15px;
}

.btn-group .btn {
    width: 168px;
    height: 54px;
}

.btn-group.icons .btn {
    width: 72px;
}

/* Status bar */
.status {
    margin: 13px 0 0 30px;
    word-spacing: .8px;
}
```
